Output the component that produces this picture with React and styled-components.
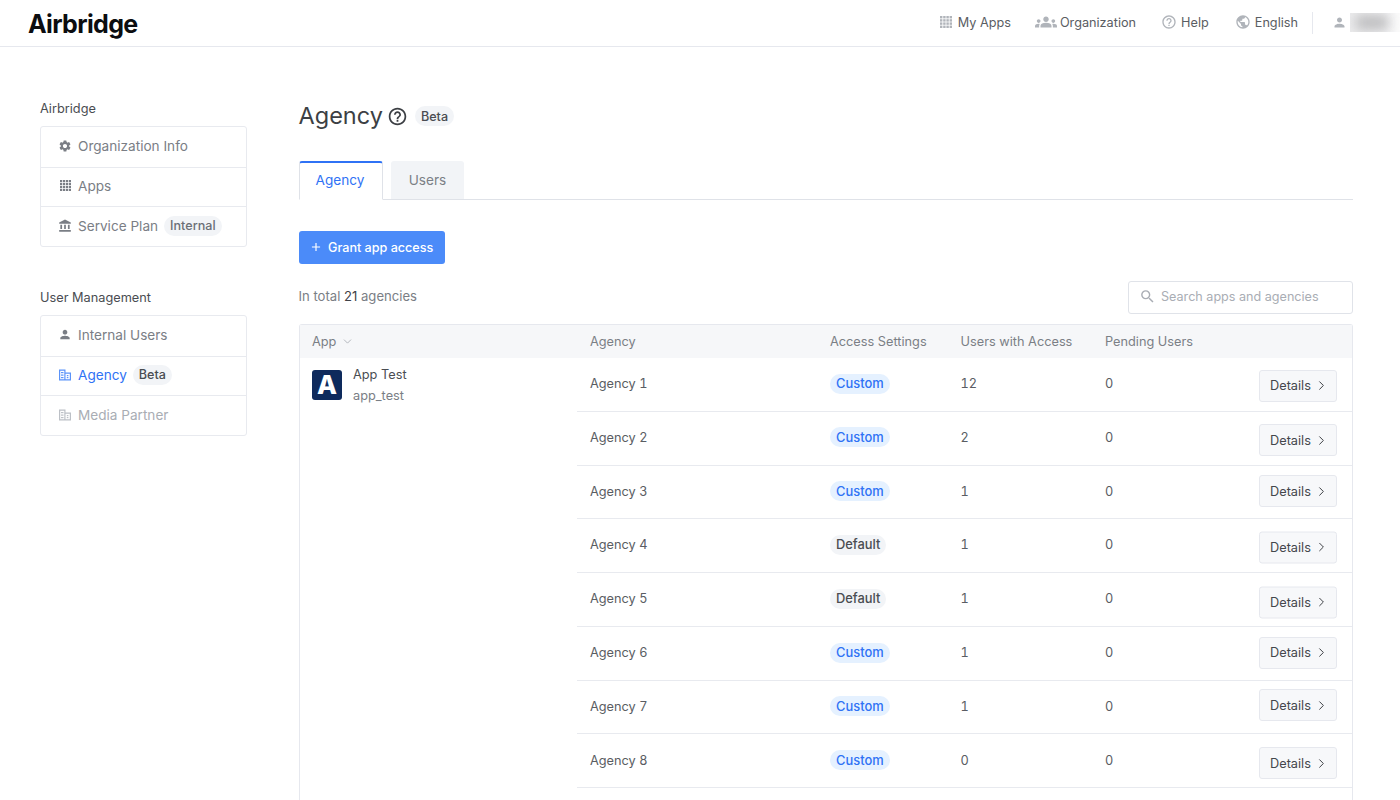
import React from "react";
import styled, { createGlobalStyle } from "styled-components";
import { MdSettings, MdPerson, MdAccountBalance, MdPublic, MdHelpOutline, MdSearch, MdAdd, MdGroups } from "react-icons/md";
import { ChevronRight, ChevronDown } from "lucide-react";

const Global = createGlobalStyle`
  html, body { margin: 0; padding: 0; height: 800px; overflow: hidden; background: #fff; }
  body { font-family: Inter, "Liberation Sans", sans-serif; font-size: 13px; color: #4a4d52; }
  * { box-sizing: border-box; }
`;

const Page = styled.div`height: 800px; overflow: hidden;`;
const Header = styled.header`
  height: 47px; border-bottom: 1px solid #e6e8ee; display: flex; align-items: center;
  justify-content: space-between; padding-left: 28px;
`;
const Logo = styled.div`font-weight: 700; font-size: 25px; color: #0c0d10; letter-spacing: -0.65px; margin-top: 1px;`;
const TopNav = styled.nav`display: flex; align-items: center; height: 100%;`;
const TopItem = styled.div`
  display: flex; align-items: center; gap: ${p => p.$gap}px; font-size: 12.7px; color: #5a5d63;
  margin-right: ${p => p.$mr}px; white-space: nowrap; margin-top: -2px;
  svg { color: #b0b4ba; flex: none; }
`;
const VDivider = styled.div`width: 1px; height: 22px; background: #e6e8ee; margin: -1px 19px 0 14px;`;
const UserBox = styled.div`display: flex; align-items: center; gap: 3px; margin-top: -1px; svg { color: #b0b4ba; }`;
const BlurName = styled.div`
  width: 50px; height: 19px; overflow: hidden; position: relative; background: linear-gradient(90deg, #ececed, #f3f3f4 70%, #fbfbfb);
  &::after { content: ""; position: absolute; left: 6px; top: 2px; width: 32px; height: 15px; background: #bdbdbf; filter: blur(6px); }
`;

const Body = styled.div`display: flex; padding: 52px 47px 0 40px; gap: 52px;`;
const Sidebar = styled.aside`width: 207px; flex: none;`;
const SideLabel = styled.div`font-size: 12.75px; line-height: 18px; padding-top: 1px; color: #4a4d52; margin-bottom: ${p => p.$mb}px;`;
const SideCard = styled.div`border: 1px solid #e8eaef; border-radius: 3px; margin-bottom: 41.5px; overflow: hidden;`;
const SideRow = styled.div`
  height: 39.67px; display: flex; align-items: center; padding: 0 0 2px 17px; gap: 6px; font-size: 13.6px;
  color: ${p => p.$active ? "#2f72f5" : p.$muted ? "#a9adb4" : "#7a7e85"};
  & + & { border-top: 1px solid #e8eaef; }
`;
const SideIcon = styled.span`
  width: 14px; height: 14px; flex: none; display: flex; align-items: center; justify-content: center;
  color: ${p => p.$active ? "#5b93f9" : p.$muted ? "#bcc0c6" : "#7a7e85"};
`;
const Pill = styled.span`
  display: inline-flex; align-items: center; height: 20px; padding: 0 6px; border-radius: 10px; margin-left: ${p => p.$ml || 0}px;
  background: #f2f4f7; color: ${p => p.$muted ? "#6b6f76" : "#4a4d52"}; font-size: 12.6px; font-weight: 500;
`;

const Main = styled.main`flex: 1; min-width: 0;`;
const TitleRow = styled.div`display: flex; align-items: center; gap: 4px; height: 34px;`;
const Title = styled.h1`margin: 0 0 0 -0.5px; font-size: 23.5px; font-weight: 400; color: #3c3f44; line-height: 34px;`;
const TabBar = styled.div`display: flex; gap: 8px; margin-top: 28px; height: 39px; border-bottom: 1px solid #dfe2e8;`;
const Tab = styled.div`
  height: 39px; display: flex; align-items: center; justify-content: center; font-size: 13.6px; border-radius: 3px 3px 0 0;
  width: ${p => p.$active ? 84 : 73}px;
  ${p => p.$active
    ? `color:#2f72f5; background:#fff; border:1px solid #dfe2e8; border-top:2px solid #2f72f5; border-bottom:1px solid #fff; padding:0 2px 3px 0;`
    : `color:#7b7f86; background:#f2f4f7; height:38px; padding-bottom:0;`}
`;
const PrimaryBtn = styled.button`
  margin-top: 31px; display: flex; align-items: center; gap: 5px; height: 33px; width: 146px; padding: 0 0 1px 10px;
  background: #4b8bf9; color: #fff; border: none; border-radius: 3px; font: 500 12.6px Inter, sans-serif; white-space: nowrap;
`;
const ToolRow = styled.div`display: flex; align-items: center; justify-content: space-between; margin-top: 17px; height: 32px;`;
const Total = styled.div`font-size: 13.1px; color: #7a7e85; margin: -2px 0 0 -0.5px; b { font-weight: 400; color: #3f4247; }`;
const Search = styled.div`
  width: 225px; height: 33px; border: 1px solid #e0e3e9; border-radius: 3px; display: flex; align-items: center;
  padding: 0 0 1px 10px; gap: 5px; font-size: 12.6px; color: #a9adb4; svg { color: #a9adb4; }
`;
const Table = styled.div`margin-top: 11px; border: 1px solid #e6e8ee; border-bottom: none; border-radius: 3px 3px 0 0;`;
const HeadRow = styled.div`
  display: grid; grid-template-columns: 277px 240px 130.5px 144.5px 1fr; height: 33px; align-items: center;
  background: #f6f7f9; font-size: 12.75px; color: #7b7f86; padding-bottom: 1px;
`;
const HeadCell = styled.div`padding-left: ${p => p.$pl ?? 13}px; display: flex; align-items: center; gap: 5px; svg { color: #a5a9b0; }`;
const TableBody = styled.div`display: flex;`;
const AppCell = styled.div`width: 277px; flex: none; display: flex; gap: 11px; padding: 12px 0 0 12px;`;
const AppLogo = styled.div`
  width: 30px; height: 30px; border-radius: 3px; background: #0e2a5c; color: #fff; font-weight: 800; font-size: 26px;
  display: flex; align-items: center; justify-content: center; line-height: 1;
`;
const AppName = styled.div`font-size: 12.75px; line-height: 17px; color: #4a4d52; margin-top: -4px;`;
const AppId = styled.div`font-size: 12.75px; line-height: 17px; color: #7a7e85; margin-top: 4px;`;
const Rows = styled.div`flex: 1; min-width: 0;`;
const Row = styled.div`
  display: grid; grid-template-columns: 240px 130.5px 144.5px 1fr; height: 53.78px; align-items: center; border-bottom: 1px solid #e8eaef;
  font-size: 12.75px; color: #5a5d63; padding-bottom: 1.4px;
`;
const Cell = styled.div`padding-left: 13px; font-variant-numeric: tabular-nums;`;
const Status = styled.span`
  display: inline-flex; align-items: center; height: 20px; padding: 0 6px; border-radius: 10px; font-weight: 500; font-size: 12.9px;
  background: ${p => p.$custom ? "#e5f1ff" : "#f2f4f7"}; color: ${p => p.$custom ? "#2f72f5" : "#4a4d52"};
`;
const ActionCell = styled.div`display: flex; justify-content: space-between; align-items: center; padding: 0 15px 0 13px; font-variant-numeric: tabular-nums;`;
const DetailsBtn = styled.button`
  width: 78px; height: 32px; border: 1px solid #e6e8ee; border-radius: 3px; background: #f7f8fa; color: #44474c;
  font: 400 12.75px Inter, sans-serif; display: flex; align-items: center; padding: 0 0 0 10px; gap: 3px; flex: none;
  transform: translateY(${p => p.$drop}px);
  svg { color: #3f4247; }
`;

const Grid = ({ size = 12 }) => (
  <svg width={size} height={size} viewBox="0 0 12 12" fill="currentColor">
    {[0, 3.2, 6.4, 9.6].flatMap(y => [0, 3.2, 6.4, 9.6].map(x => <rect key={`${x}-${y}`} x={x} y={y} width="2.4" height="2.4" />))}
  </svg>
);
const Building = () => (
  <svg width="14" height="14" viewBox="0 0 14 14" fill="currentColor">
    <path d="M1 1.5h6.5v3H13v8H1zM2.2 2.7v8.6h4.1V2.7zM7.5 5.7v5.6h4.3V5.7z" fillRule="evenodd" />
    <rect x="3" y="4" width="2.5" height="1.2" /><rect x="3" y="6.5" width="2.5" height="1.2" /><rect x="3" y="9" width="2.5" height="1.2" />
    <rect x="8.8" y="7" width="1.6" height="1.2" /><rect x="8.8" y="9" width="1.6" height="1.2" />
  </svg>
);

const data = [
  ["Agency 1", true, "12", 2],
  ["Agency 2", true, "2", 3],
  ["Agency 3", true, "1", 0],
  ["Agency 4", false, "1", 2.5],
  ["Agency 5", false, "1", 3.5],
  ["Agency 6", true, "1", 0],
  ["Agency 7", true, "1", -1],
  ["Agency 8", true, "0", 3],
];

export default function App() {
  return (
    <Page>
      <Global />
      <Header>
        <Logo>Airbridge</Logo>
        <TopNav>
          <TopItem $gap={6} $mr={24}><Grid /><span>My Apps</span></TopItem>
          <TopItem $gap={3} $mr={25}><MdGroups size={22} /><span>Organization</span></TopItem>
          <TopItem $gap={4} $mr={26}><MdHelpOutline size={16} /><span>Help</span></TopItem>
          <TopItem $gap={4} $mr={0}><MdPublic size={16} /><span>English</span></TopItem>
          <VDivider />
          <UserBox><MdPerson size={15} /><BlurName /></UserBox>
        </TopNav>
      </Header>
      <Body>
        <Sidebar>
          <SideLabel $mb={8}>Airbridge</SideLabel>
          <SideCard>
            <SideRow><SideIcon><MdSettings size={14} /></SideIcon>Organization Info</SideRow>
            <SideRow><SideIcon><Grid size={11} /></SideIcon>Apps</SideRow>
            <SideRow><SideIcon><MdAccountBalance size={14} /></SideIcon>Service Plan<Pill $muted>Internal</Pill></SideRow>
          </SideCard>
          <SideLabel $mb={7.5}>User Management</SideLabel>
          <SideCard>
            <SideRow><SideIcon><MdPerson size={15} /></SideIcon>Internal Users</SideRow>
            <SideRow $active><SideIcon $active><Building /></SideIcon>Agency<Pill>Beta</Pill></SideRow>
            <SideRow $muted><SideIcon $muted><Building /></SideIcon>Media Partner</SideRow>
          </SideCard>
        </Sidebar>
        <Main>
          <TitleRow>
            <Title>Agency</Title>
            <MdHelpOutline size={21} color="#3c3f44" />
            <Pill $ml={3}>Beta</Pill>
          </TitleRow>
          <TabBar>
            <Tab $active>Agency</Tab>
            <Tab>Users</Tab>
          </TabBar>
          <PrimaryBtn><MdAdd size={14} />Grant app access</PrimaryBtn>
          <ToolRow>
            <Total>In total <b>21</b> agencies</Total>
            <Search><MdSearch size={17} />Search apps and agencies</Search>
          </ToolRow>
          <Table>
            <HeadRow>
              <HeadCell $pl={12}>App<ChevronDown size={13} strokeWidth={1.5} /></HeadCell>
              <HeadCell>Agency</HeadCell>
              <HeadCell>Access Settings</HeadCell>
              <HeadCell>Users with Access</HeadCell>
              <HeadCell>Pending Users</HeadCell>
            </HeadRow>
            <TableBody>
              <AppCell>
                <AppLogo>A</AppLogo>
                <div>
                  <AppName>App Test</AppName>
                  <AppId>app_test</AppId>
                </div>
              </AppCell>
              <Rows>
                {data.map(([name, custom, users, drop]) => (
                  <Row key={name}>
                    <Cell>{name}</Cell>
                    <Cell><Status $custom={custom}>{custom ? "Custom" : "Default"}</Status></Cell>
                    <Cell>{users}</Cell>
                    <ActionCell>
                      <span>0</span>
                      <DetailsBtn $drop={drop}>Details<ChevronRight size={15} strokeWidth={1.6} /></DetailsBtn>
                    </ActionCell>
                  </Row>
                ))}
                <Row>
                  <Cell />
                  <Cell />
                  <Cell />
                  <ActionCell>
                    <span />
                    <DetailsBtn $drop={3} aria-label="Details" />
                  </ActionCell>
                </Row>
              </Rows>
            </TableBody>
          </Table>
        </Main>
      </Body>
    </Page>
  );
}
